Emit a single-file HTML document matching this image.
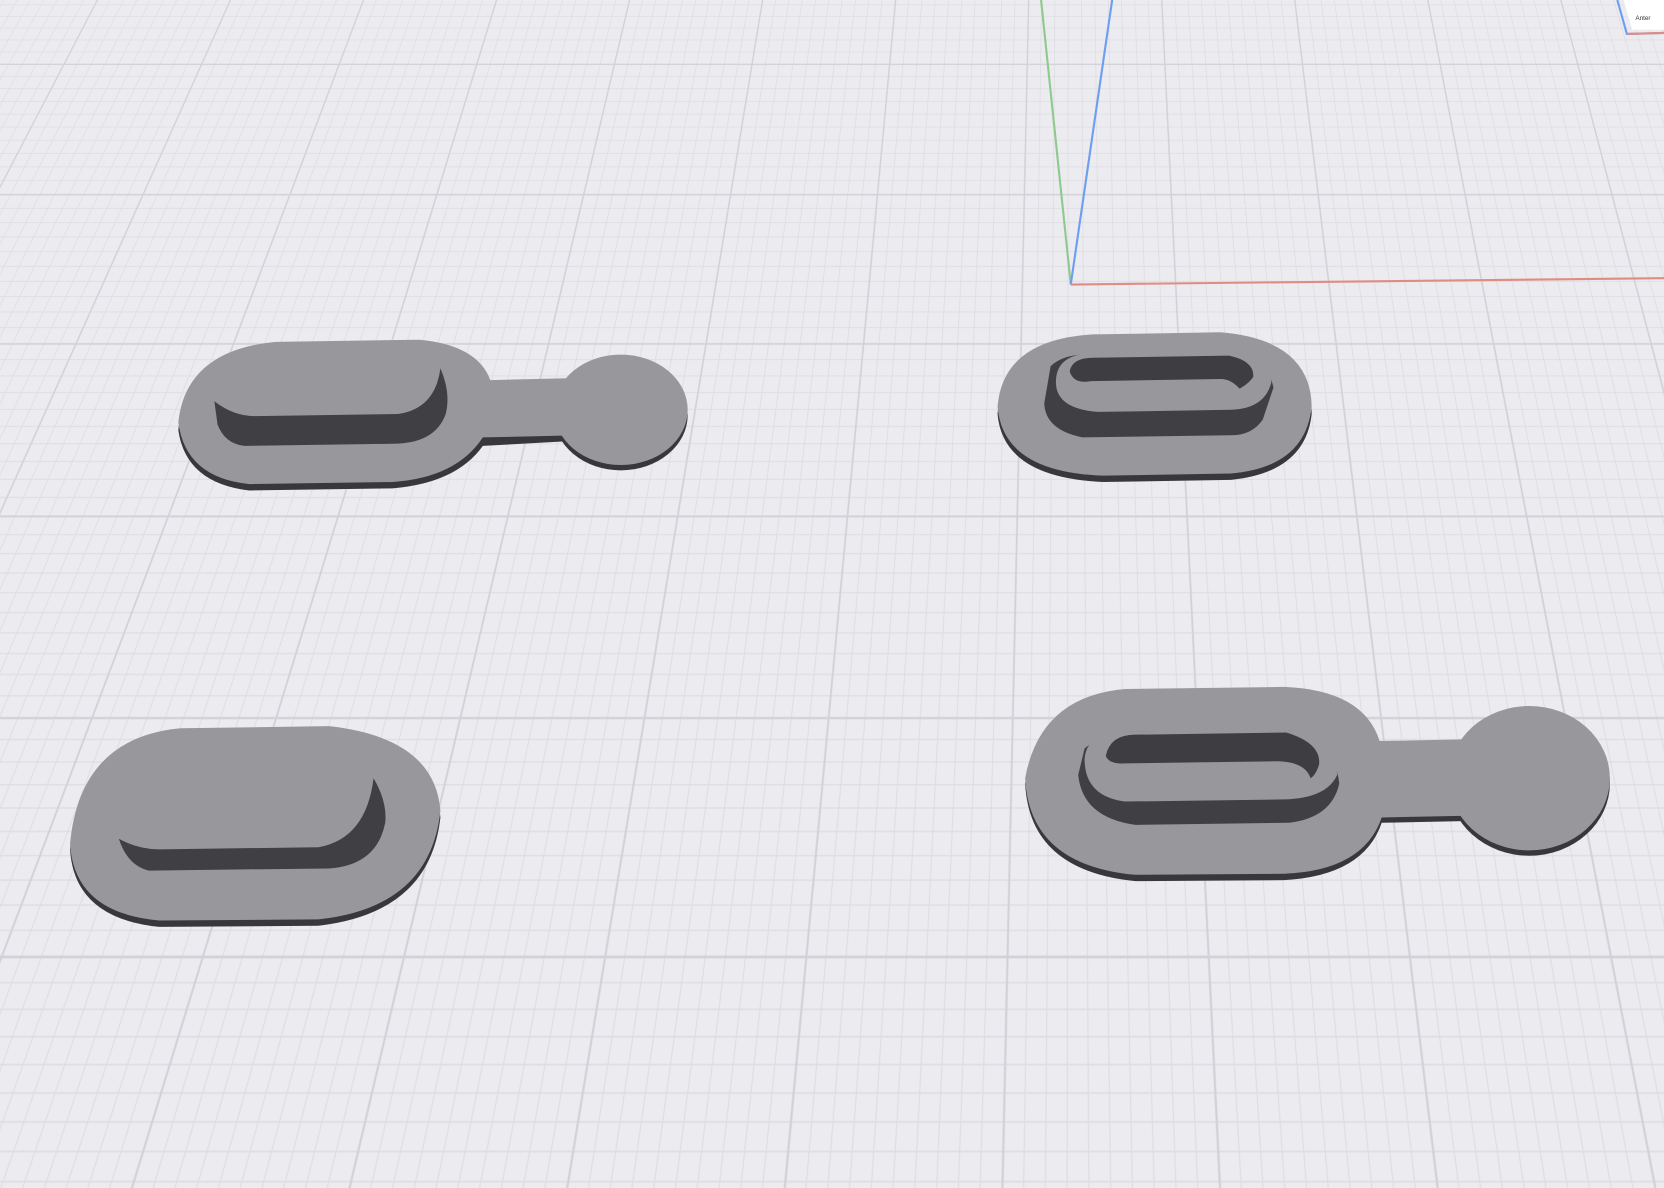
<!DOCTYPE html>
<html><head><style>
html,body{margin:0;padding:0;width:1664px;height:1188px;overflow:hidden;background:#ecebef;position:relative}
#wrap{position:absolute;left:0;top:0;width:1664px;height:1188px;perspective:1400px;perspective-origin:1070px -200px;overflow:hidden;contain:paint}
#plane{position:absolute;left:-1500px;top:-1000px;width:4800px;height:3600px;transform-origin:50% 50%;transform:rotateX(40deg);
background-color:#ecebef;
background-image:
linear-gradient(#d2d1d7 2px,transparent 2px),
linear-gradient(90deg,#d2d1d7 2px,transparent 2px),
linear-gradient(#dddce1 1px,transparent 1px),
linear-gradient(90deg,#dddce1 1px,transparent 1px);
background-size:190px 190px,190px 190px,19px 19px,19px 19px;background-position:40px 20px}
svg{position:absolute;left:0;top:0}
</style></head><body>
<div id="wrap"><div id="plane"></div></div>
<svg width="1664" height="1188" viewBox="0 0 1568 1119" preserveAspectRatio="none">
<line x1="981" y1="0" x2="1009" y2="268" stroke="#8fc98f" stroke-width="2"/>
<line x1="1048" y1="0" x2="1009" y2="268" stroke="#6d9ef0" stroke-width="2"/>
<line x1="1009" y1="268" x2="1568" y2="262" stroke="#e08b84" stroke-width="2"/>
<path d="M1530 0 L1538 28 L1568 28 L1568 0Z" fill="#fff"/>
<path d="M1524 0 L1533 32 L1568 31" fill="none" stroke="#6d9ef0" stroke-width="2"/>
<line x1="1533" y1="32" x2="1568" y2="31" stroke="#e08b84" stroke-width="2"/>
<text x="1541" y="19" font-family="Liberation Sans,sans-serif" font-size="6" fill="#333">Anter</text>

<g fill="#38383c">
<path d="M260 327 L395 325 Q450 330 462 365 L545 363 L545 415 L455 420 Q430 455 370 460 L235 462 Q175 455 168 405 Q175 335 260 327Z"/>
<ellipse cx="585" cy="391" rx="63" ry="52"/>
<path d="M1030 320 L1150 318 Q1235 325 1236 390 Q1230 445 1160 452 L1040 454 Q945 450 940 390 Q945 325 1030 320Z"/>
<path d="M170 691 L310 689 Q410 700 415 770 Q405 860 300 872 L150 873 Q70 865 66 800 Q75 700 170 691Z"/>
<path d="M1060 653 L1210 651 Q1285 655 1300 702 L1400 700 L1400 773 L1302 775 Q1285 825 1210 829 L1070 830 Q970 820 966 738 Q980 660 1060 653Z"/>
<ellipse cx="1441" cy="738" rx="76" ry="68"/>
</g>
<g fill="#98989c">
<path d="M260 322 L395 320 Q450 325 462 358 L545 356 L545 410 L455 412 Q430 450 370 454 L235 456 Q175 450 168 398 Q175 330 260 322Z"/>
<ellipse cx="585" cy="386" rx="63" ry="52"/>
<path d="M1030 315 L1150 313 Q1235 320 1236 383 Q1230 440 1160 446 L1040 448 Q945 445 940 383 Q945 320 1030 315Z"/>
<path d="M170 686 L310 684 Q410 695 415 764 Q405 855 300 866 L150 867 Q70 860 66 795 Q75 695 170 686Z"/>
<path d="M1060 649 L1210 647 Q1285 650 1300 698 L1400 696 L1400 768 L1302 770 Q1285 820 1210 823 L1070 824 Q970 815 966 733 Q980 656 1060 649Z"/>
<ellipse cx="1441" cy="733" rx="76" ry="68"/>
</g>
<g fill="#404044">
<path d="M202 378 Q220 392 240 392 L375 390 Q410 385 415 347 Q425 370 420 390 Q410 418 370 418 L230 420 Q212 418 205 400Z"/>
<path d="M990 345 Q1000 335 1020 334 L1160 333 Q1195 340 1200 365 L1190 395 Q1180 410 1160 410 L1020 412 Q985 405 984 380Z"/>
<path d="M112 790 Q130 800 150 800 L300 798 Q345 790 352 733 Q365 755 363 775 Q355 815 310 818 L140 820 Q120 815 112 790Z"/>
<path d="M1022 705 Q1040 690 1060 689 L1215 688 Q1258 700 1262 738 Q1255 770 1215 775 L1070 777 Q1020 770 1016 730Z"/>
</g>
<g fill="#98989c">
<path d="M995 360 Q995 333 1030 333 L1160 331 Q1195 335 1198 360 Q1192 385 1160 386 L1035 388 Q995 385 995 360Z"/>
<path d="M1008 350 Q1010 337 1030 337 L1158 335 Q1182 340 1181 355 Q1176 362 1168 366 Q1160 357 1150 357 L1028 359 Q1012 362 1008 350Z" fill="#3e3e42"/>
<path d="M1022 715 Q1024 689 1060 689 L1210 687 Q1258 695 1260 730 Q1250 752 1210 753 L1060 755 Q1022 750 1022 715Z"/>
<path d="M1042 712 Q1046 692 1070 692 L1212 690 Q1245 700 1243 720 Q1240 730 1235 733 Q1230 718 1205 717 L1060 719 Q1045 720 1042 712Z" fill="#3e3e42"/>
</g>
</svg>
</body></html>
